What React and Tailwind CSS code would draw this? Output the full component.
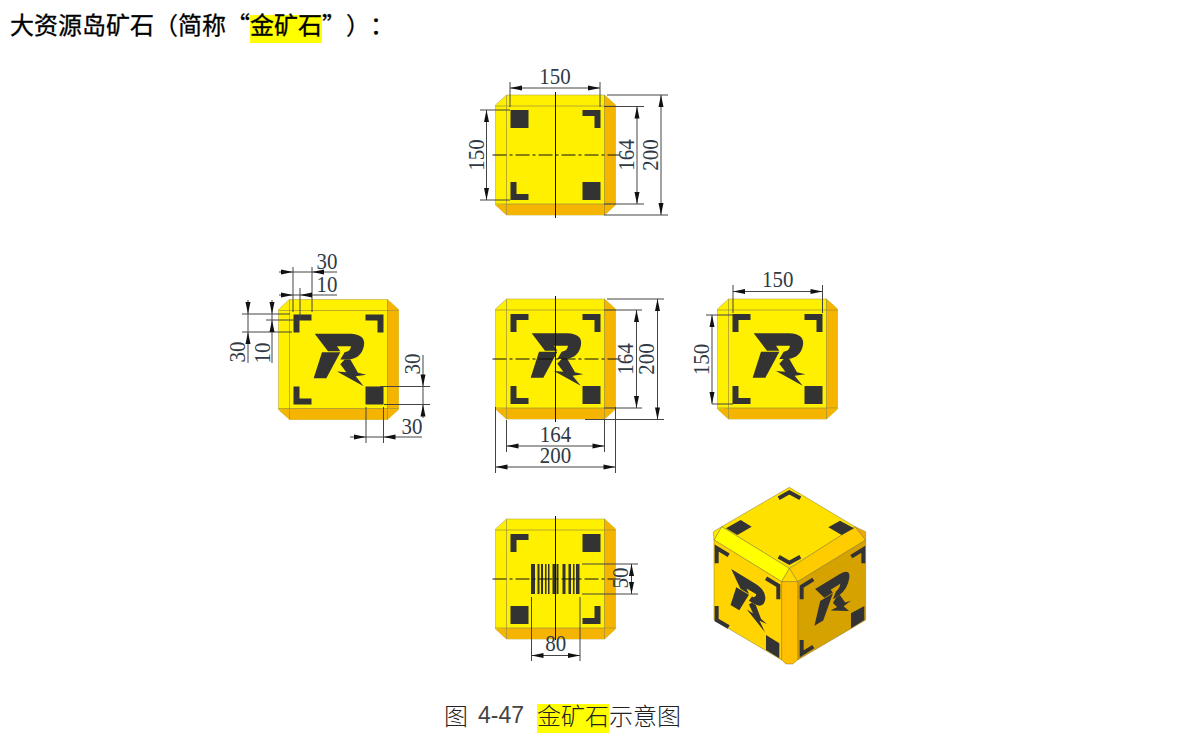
import React from "react";

const LINE = "#444444";
const MARK = "#333333";
const SERIF = "'Liberation Serif', serif";

// R logo traced around the face centre, the 226.5/222 offset is the centre in the traced crop
const R_TOP = "M155 145 L262 145 Q308 147 303 180 Q296 218 258 222 L232 222 L245 200 Q262 198 264 182 L222 182 L232 197 L195 197 Z";
const R_STEM = "M177 200 L232 200 L190 278 L152 278 Z";
const R_BOLT = "M245 222 L262 222 L285 262 L310 268 L278 272 L302 302 L222 258 L250 260 L232 236 Z";

const BARS = [
	[0, 4],
	[6.5, 2],
	[10, 2],
	[14, 1.5],
	[17, 1.5],
	[21.5, 2.5],
	[25.5, 2],
	[31.5, 3],
	[37.5, 2.5],
	[42, 1.5],
	[45, 3.5],
];

const Ln = ({ x1, y1, x2, y2, w = 1, c = LINE }) => <line x1={x1} y1={y1} x2={x2} y2={y2} stroke={c} strokeWidth={w} />;

const Arrow = ({ x, y, dir }) => {
	const pts = {
		r: `${x},${y} ${x - 12},${y - 2.5} ${x - 12},${y + 2.5}`,
		l: `${x},${y} ${x + 12},${y - 2.5} ${x + 12},${y + 2.5}`,
		d: `${x},${y} ${x - 2.5},${y - 12} ${x + 2.5},${y - 12}`,
		u: `${x},${y} ${x - 2.5},${y + 12} ${x + 2.5},${y + 12}`,
	};
	return <polygon points={pts[dir]} fill="#111111" />;
};

const Num = ({ x, y, t, rot }) => (
	<text
		transform={`translate(${x} ${y})${rot ? " rotate(-90)" : ""} scale(0.95 1.05)`}
		textAnchor="middle"
		dominantBaseline="central"
		fontFamily={SERIF}
		fontSize="22"
		fill="#2f3a45"
	>
		{t}
	</text>
);

// dimension with the arrows inside, tips on the ends. ext lines are drawn by the caller
const HDim = ({ y, x1, x2, t, tx }) => (
	<g>
		<Ln x1={x1} y1={y} x2={x2} y2={y} />
		<Arrow x={x1} y={y} dir="l" />
		<Arrow x={x2} y={y} dir="r" />
		<Num x={tx ?? (x1 + x2) / 2} y={y - 12} t={t} />
	</g>
);

const VDim = ({ x, y1, y2, t, ty, tx }) => (
	<g>
		<Ln x1={x} y1={y1} x2={x} y2={y2} />
		<Arrow x={x} y={y1} dir="u" />
		<Arrow x={x} y={y2} dir="d" />
		<Num x={tx ?? x - 11} y={ty ?? (y1 + y2) / 2} t={t} rot />
	</g>
);

const Logo = ({ transform }) => (
	<g transform={transform} fill={MARK}>
		<g transform="scale(0.3333) translate(-226.5 -222)">
			<path d={R_TOP} />
			<path d={R_STEM} />
			<path d={R_BOLT} />
		</g>
	</g>
);

const Corner = ({ cx, cy, sx, sy }) => {
	const px = cx + sx * 45;
	const py = cy + sy * 45;
	const pts = [
		[px, py],
		[px - sx * 18, py],
		[px - sx * 18, py - sy * 6],
		[px - sx * 6, py - sy * 6],
		[px - sx * 6, py - sy * 18],
		[px, py - sy * 18],
	];
	return <polygon points={pts.map((p) => p.join(",")).join(" ")} fill={MARK} />;
};

const Sq = ({ cx, cy, sx, sy }) => (
	<rect x={sx > 0 ? cx + 27 : cx - 45} y={sy > 0 ? cy + 27 : cy - 45} width="18" height="18" fill={MARK} />
);

// marks: tl, tr, bl, br, "c" corner bracket or "s" solid square
const Face = ({ cx, cy, marks, children }) => {
	const spots = [
		[-1, -1],
		[1, -1],
		[-1, 1],
		[1, 1],
	];
	return (
		<g>
			<polygon
				points={`${cx - 49},${cy - 60} ${cx + 49},${cy - 60} ${cx + 60},${cy - 50} ${cx + 60},${cy + 50} ${cx + 49},${cy + 60} ${cx - 49},${cy + 60} ${cx - 60},${cy + 50} ${cx - 60},${cy - 50}`}
				fill="#fff000"
				stroke="#b7a84a"
				strokeWidth="0.6"
			/>
			<polygon points={`${cx + 49},${cy - 60} ${cx + 60},${cy - 50} ${cx + 60},${cy + 50} ${cx + 49},${cy + 49}`} fill="#f5b400" />
			<polygon points={`${cx - 60},${cy + 50} ${cx - 49},${cy + 49} ${cx + 49},${cy + 49} ${cx + 60},${cy + 50} ${cx + 49},${cy + 60} ${cx - 49},${cy + 60}`} fill="#f5b400" />
			<Ln x1={cx - 49} y1={cy - 60} x2={cx - 49} y2={cy + 60} c="#9c8f3a" w={0.7} />
			<Ln x1={cx + 49} y1={cy - 60} x2={cx + 49} y2={cy + 60} c="#9c8f3a" w={0.7} />
			<Ln x1={cx - 60} y1={cy - 49} x2={cx + 60} y2={cy - 49} c="#9c8f3a" w={0.7} />
			<Ln x1={cx - 60} y1={cy + 49} x2={cx + 60} y2={cy + 49} c="#9c8f3a" w={0.7} />
			{marks.map((m, i) =>
				m === "c" ? (
					<Corner key={i} cx={cx} cy={cy} sx={spots[i][0]} sy={spots[i][1]} />
				) : (
					<Sq key={i} cx={cx} cy={cy} sx={spots[i][0]} sy={spots[i][1]} />
				),
			)}
			{children}
		</g>
	);
};

const CenterLines = ({ cx, cy, top, bottom }) => (
	<g>
		<Ln x1={cx} y1={top} x2={cx} y2={bottom} c="#111111" />
		<line x1={cx - 63} y1={cy} x2={cx + 65} y2={cy} stroke="#111111" strokeWidth="1" strokeDasharray="14 3 3 3" />
	</g>
);

const TopView = () => (
	<g>
		<Face cx={555.5} cy={155} marks={["s", "c", "c", "s"]} />
		<CenterLines cx={555.5} cy={155} top={92} bottom={218} />
		<Ln x1={510} y1={82} x2={510} y2={107} />
		<Ln x1={600} y1={82} x2={600} y2={107} />
		<HDim y={88} x1={510} x2={600} t="150" />
		<Ln x1={480} y1={110} x2={510} y2={110} />
		<Ln x1={480} y1={200} x2={510} y2={200} />
		<VDim x={486.5} y1={110} y2={200} t="150" tx={476} />
		<Ln x1={604} y1={106.5} x2={644} y2={106.5} />
		<Ln x1={604} y1={204} x2={644} y2={204} />
		<VDim x={637} y1={106.5} y2={204} t="164" tx={626.5} ty={155} />
		<Ln x1={607} y1={95} x2={668} y2={95} />
		<Ln x1={604} y1={215} x2={668} y2={215} />
		<VDim x={661} y1={95} y2={215} t="200" tx={650} ty={155} />
	</g>
);

const LeftView = () => (
	<g>
		<Face cx={338.5} cy={359.5} marks={["c", "c", "c", "s"]}>
			<Logo transform="translate(338.5 359.5)" />
		</Face>
		<Ln x1={293} y1={267} x2={293} y2={312} />
		<Ln x1={312} y1={267} x2={312} y2={312} />
		<Ln x1={300} y1={288} x2={300} y2={320} />
		<Ln x1={279} y1={272} x2={337} y2={272} />
		<Arrow x={293} y={272} dir="r" />
		<Arrow x={312} y={272} dir="l" />
		<Num x={327} y={261} t="30" />
		<Ln x1={279} y1={295} x2={337} y2={295} />
		<Arrow x={293} y={295} dir="r" />
		<Arrow x={300} y={295} dir="l" />
		<Num x={327} y={284} t="10" />
		<Ln x1={242} y1={314} x2={290} y2={314} />
		<Ln x1={242} y1={332} x2={292} y2={332} />
		<Ln x1={266} y1={320} x2={298} y2={320} />
		<Ln x1={248} y1={300} x2={248} y2={363} />
		<Arrow x={248} y={314} dir="d" />
		<Arrow x={248} y={332} dir="u" />
		<Num x={237} y={352} t="30" rot />
		<Ln x1={272} y1={300} x2={272} y2={363} />
		<Arrow x={272} y={314} dir="d" />
		<Arrow x={272} y={320} dir="u" />
		<Num x={262} y={353} t="10" rot />
		<Ln x1={380} y1={386.5} x2={430} y2={386.5} />
		<Ln x1={384} y1={404.5} x2={430} y2={404.5} />
		<Ln x1={423} y1={355} x2={423} y2={418} />
		<Arrow x={423} y={386.5} dir="d" />
		<Arrow x={423} y={404.5} dir="u" />
		<Num x={412} y={364} t="30" rot />
		<Ln x1={366} y1={407} x2={366} y2={443} />
		<Ln x1={383.5} y1={407} x2={383.5} y2={443} />
		<Ln x1={350} y1={437} x2={422} y2={437} />
		<Arrow x={366} y={437} dir="r" />
		<Arrow x={383.5} y={437} dir="l" />
		<Num x={412} y={426} t="30" />
	</g>
);

const MiddleView = () => (
	<g>
		<Face cx={555.5} cy={359} marks={["c", "c", "c", "s"]}>
			<Logo transform="translate(555.5 359)" />
		</Face>
		<CenterLines cx={555.5} cy={359} top={296} bottom={422} />
		<Ln x1={604} y1={310} x2={642} y2={310} />
		<Ln x1={604} y1={408} x2={642} y2={408} />
		<VDim x={636.5} y1={310} y2={408} t="164" tx={625.5} ty={359} />
		<Ln x1={607} y1={299} x2={664} y2={299} />
		<Ln x1={585} y1={419.5} x2={664} y2={419.5} />
		<VDim x={657.5} y1={299} y2={419.5} t="200" tx={646.5} ty={359} />
		<Ln x1={506.5} y1={420} x2={506.5} y2={452} />
		<Ln x1={604.5} y1={420} x2={604.5} y2={452} />
		<HDim y={446} x1={506.5} x2={604.5} t="164" />
		<Ln x1={495.5} y1={407} x2={495.5} y2={473} />
		<Ln x1={615.5} y1={407} x2={615.5} y2={473} />
		<HDim y={467} x1={495.5} x2={615.5} t="200" />
	</g>
);

const RightView = () => (
	<g>
		<Face cx={777.5} cy={359} marks={["c", "c", "c", "s"]}>
			<Logo transform="translate(777.5 359)" />
		</Face>
		<Ln x1={733} y1={285} x2={733} y2={313} />
		<Ln x1={822.5} y1={285} x2={822.5} y2={313} />
		<HDim y={291.5} x1={733} x2={822.5} t="150" />
		<Ln x1={706} y1={315} x2={733} y2={315} />
		<Ln x1={712} y1={404} x2={733} y2={404} />
		<VDim x={712} y1={315} y2={404} t="150" tx={701} />
	</g>
);

const BottomView = () => (
	<g>
		<Face cx={555.5} cy={579} marks={["c", "s", "s", "c"]}>
			{BARS.map(([x, w]) => (
				<rect key={x} x={531 + x} y={564} width={w} height={30} fill={MARK} />
			))}
		</Face>
		<CenterLines cx={555.5} cy={579} top={516} bottom={640} />
		<Ln x1={582} y1={564} x2={638} y2={564} />
		<Ln x1={582} y1={594} x2={638} y2={594} />
		<Ln x1={631.5} y1={564} x2={631.5} y2={594} />
		<Arrow x={631.5} y={564} dir="u" />
		<Arrow x={631.5} y={594} dir="d" />
		<Num x={620} y={578} t="50" rot />
		<Ln x1={531.5} y1={597} x2={531.5} y2={661} />
		<Ln x1={580} y1={597} x2={580} y2={661} />
		<HDim y={655.5} x1={531.5} x2={580} t="80" />
	</g>
);

const CUBE_EDGE = { stroke: "#7d7330", strokeWidth: 1.4 };

// traced at 3x from the crop, hence the scale on the whole group
const Cube = () => (
	<g transform="translate(700 480) scale(0.3333)">
		<polygon {...CUBE_EDGE} points="268,22 465,140 268,265 65,140" fill="#ffe100" />
		<polygon {...CUBE_EDGE} points="65,140 268,265 245,305 42,180" fill="#ffff00" />
		<polygon {...CUBE_EDGE} points="268,265 465,140 497,180 293,305" fill="#ffcc00" />
		<polygon {...CUBE_EDGE} points="40,155 65,140 42,180" fill="#ffe800" />
		<polygon {...CUBE_EDGE} points="465,140 497,155 497,180" fill="#f0a800" />
		<polygon {...CUBE_EDGE} points="268,265 245,305 293,305" fill="#ffd900" />
		<polygon {...CUBE_EDGE} points="42,180 245,305 245,540 42,420" fill="#ffd400" />
		<polygon {...CUBE_EDGE} points="293,305 497,180 497,420 293,540" fill="#d6a200" />
		<polygon {...CUBE_EDGE} points="245,305 293,305 293,540 278,552 258,552 245,540" fill="#ffc000" />

		<g fill={MARK}>
			<polygon points="78,145 122,120 155,140 112,165" />
			<polygon points="385,142 420,122 462,145 425,165" />
			<polygon points="198,465 238,490 238,535 198,510" />
			<polygon points="453,400 493,378 493,420 453,445" />
		</g>
		<g fill="none" stroke={MARK} strokeWidth="12">
			<polyline points="236,55 268,37 301,55" />
			<polyline points="236,230 268,248 301,230" />
			<polyline points="86,226 50,204 50,250" />
			<polyline points="198,295 235,317 235,358" />
			<polyline points="50,378 50,420 86,441" />
			<polyline points="340,298 305,320 305,358" />
			<polyline points="454,230 490,208 490,250" />
			<polyline points="305,480 305,522 340,500" />
		</g>
		<Logo transform="matrix(2.07 1.25 0 2.45 143 360)" />
		<Logo transform="matrix(2.08 -1.27 0 2.45 395 360)" />
	</g>
);

const App = () => {
	return (
		<div className="w-full h-[744px] bg-white overflow-hidden text-black">
			<div className="flex h-[50px] pl-[10px] pt-[15px] text-[24px] leading-[18px] font-['Noto_Sans_CJK_SC',sans-serif] [-webkit-text-stroke:0.3px_black] [text-spacing-trim:space-all]">
				<span>大资源岛矿石（简称“</span>
				<span className="bg-[#ffff00] h-[28px]">金矿石</span>
				<span>”）：</span>
			</div>
			<svg className="block" width="1181" height="654" viewBox="0 50 1181 654">
				<TopView />
				<LeftView />
				<MiddleView />
				<RightView />
				<BottomView />
				<Cube />
			</svg>
			<div className="flex items-start pl-[444px] text-[24px] leading-[22px] font-['Noto_Sans_CJK_SC',sans-serif] font-light text-[#222222] [text-spacing-trim:space-all]">
				<span>图</span>
				<span className="ml-[10px] mr-[13px] text-[23px] text-[#444444] font-['Liberation_Sans',sans-serif]">4-47</span>
				<span className="bg-[#ffff00] h-[29px]">金矿石</span>
				<span>示意图</span>
			</div>
		</div>
	);
};

export default App;
